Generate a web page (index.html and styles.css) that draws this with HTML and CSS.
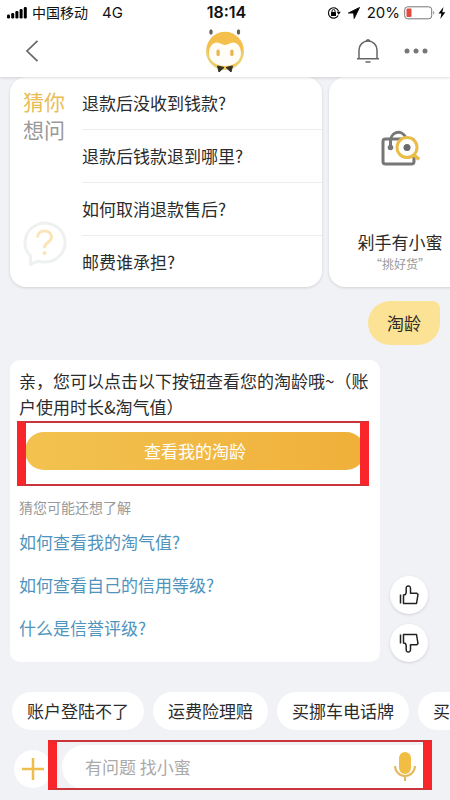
FILE: index.html
```html
<!DOCTYPE html>
<html lang="zh-CN">
<head>
<meta charset="utf-8">
<meta name="viewport" content="width=device-width, initial-scale=1">
<title>小蜜客服</title>
<link rel="stylesheet" href="styles.css">
</head>
<body>
<header class="top">
  <div class="status">
    <div class="status-side">
      <svg width="20" height="12" viewBox="0 0 20 12" aria-hidden="true"><rect x="0" y="7.5" width="3" height="4" rx="1.2"/><rect x="4.2" y="6" width="3" height="5.5" rx="1.2"/><rect x="8.4" y="4" width="3" height="7.5" rx="1.2"/><rect x="12.6" y="2" width="3" height="9.5" rx="1.2"/><rect x="16.8" y="0" width="3" height="11.5" rx="1.2"/></svg>
      <span class="carrier">中国移动</span>
      <span class="network">4G</span>
    </div>
    <time class="clock">18:14</time>
    <div class="status-side status-right">
      <svg width="14" height="14" viewBox="0 0 14 14" aria-hidden="true"><path d="M11.2 9.5A5.2 5.2 0 1 1 11.6 5.4" fill="none" stroke="#111" stroke-width="1.2"/><path d="M9.6 5.8h4.2l-2.1 3z"/><rect x="4" y="6" width="5" height="4" rx=".5"/><path d="M5 6.2V5a1.5 1.5 0 0 1 3 0v1.2" fill="none" stroke="#111"/></svg>
      <svg class="locator" width="12" height="12" viewBox="0 0 12 12" aria-hidden="true"><path d="M11.5.5.4 6h5.3l.5 5.5z" stroke="#111"/></svg>
      <span class="percent">20%</span>
      <svg width="42" height="14" viewBox="0 0 42 14" aria-hidden="true"><rect x=".7" y=".8" width="27" height="12" rx="3" fill="none" stroke="#777"/><rect x="2.5" y="2.6" width="5" height="8.4" rx="1" fill="#e34b3f"/><path d="M29.3 4.8q2 2 0 4z" fill="#777"/><path d="M39.5 1 34.5 7.5h3L36.3 13l5-6.700h-3z"/></svg>
    </div>
  </div>
  <nav class="nav">
    <button class="icon-button" aria-label="返回"><svg width="14" height="24" viewBox="0 0 14 24"><path d="M12.5 1.8 2 12l10.500 10.200" fill="none" stroke="#666" stroke-width="1.700"/></svg></button>
    <svg class="bee" width="40" height="46" viewBox="0 0 40 46" aria-hidden="true"><ellipse cx="6" cy="4" rx="1.700" ry="2.700" fill="#665f54"/><ellipse cx="33.500" cy="4" rx="1.700" ry="2.700" fill="#665f54"/><circle cx="20" cy="22.500" r="18.700" fill="#f4c04b"/><path d="M2 23a18 18 0 0 0 36 0" fill="none" stroke="#e8d274" stroke-width="2"/><path d="M4 25.500c0-7 3.500-11 8-11 3 0 5 2.500 8 2.500s5-2.500 8-2.500c4.500 0 8 4 8 11 0 7.500-6.500 12.500-16 12.500S4 33 4 25.500z" fill="#fffdf6"/><rect x="11.500" y="21.500" width="3.200" height="6.500" rx="1.500" fill="#e6b450"/><rect x="25.300" y="21.500" width="3.200" height="6.500" rx="1.500" fill="#e6b450"/><path d="M12.500 38l6.500 1.500-5 4.500zM27.500 38 21 39.500l5 4.500z" fill="#333126" stroke="#333126" stroke-linejoin="round"/></svg>
    <div class="nav-actions">
      <button class="icon-button" aria-label="通知"><svg width="24" height="26" viewBox="0 0 24 26"><path d="M3 20.800V12a9 9 0 0 1 18 0v8.800M1 20.800h22M10 3q2-2.500 4 0M9.500 24h5" fill="none" stroke="#666" stroke-width="1.500"/></svg></button>
      <button class="icon-button" aria-label="更多"><svg width="24" height="6" viewBox="0 0 24 6" fill="#777"><circle cx="3" cy="3" r="2.500"/><circle cx="12" cy="3" r="2.500"/><circle cx="21" cy="3" r="2.500"/></svg></button>
    </div>
  </nav>
</header>

<main class="chat">
  <div class="cards">
    <section class="card guess">
      <div class="guess-side">
        <h2 class="guess-title"><span class="gold">猜你</span><br>想问</h2>
        <svg width="44" height="46" viewBox="0 0 44 46" aria-hidden="true"><path d="M7.500 43.500V35A20 19.500 0 1 1 20 41q-3-.3-5-.8z" fill="none" stroke="#edf1f0" stroke-width="3" stroke-linejoin="round"/><path d="M14.500 16.500c0-4 3-6.500 7-6.500s7 2.500 7 6c0 5.500-7 5-7 11" fill="none" stroke="#fbe5b8" stroke-width="3"/><circle cx="21.500" cy="32" r="2" fill="#fbe5b8"/></svg>
      </div>
      <ul class="questions">
        <li><a href="#">退款后没收到钱款?</a></li>
        <li><a href="#">退款后钱款退到哪里?</a></li>
        <li><a href="#">如何取消退款售后?</a></li>
        <li><a href="#">邮费谁承担?</a></li>
      </ul>
    </section>
    <section class="card promo">
      <svg width="40" height="38" viewBox="0 0 40 38" fill="none" aria-hidden="true"><rect x="3" y="9" width="31" height="25" rx="2.500" stroke="#777" stroke-width="3"/><path d="M10.500 17V12a8 9 0 0 1 15-5" stroke="#777" stroke-width="3"/><circle cx="10.500" cy="17.500" r="2.800" fill="#777"/><circle cx="27" cy="17.500" r="10" fill="#fff" stroke="#e9bd48" stroke-width="3"/><path d="m33.500 24.500 5.500 5" stroke="#e9bd48" stroke-width="3.500"/><circle cx="27" cy="17.500" r="3.500" fill="#6b6b6b"/></svg>
      <h3 class="promo-title">剁手有小蜜</h3>
      <p class="promo-note">“挑好货”</p>
    </section>
  </div>

  <p class="bubble">淘龄</p>

  <div class="reply">
    <article class="answer">
      <p class="answer-text">亲，您可以点击以下按钮查看您的淘龄哦~（账户使用时长&amp;淘气值）</p>
      <div class="mark mark-answer"><button class="primary">查看我的淘龄</button></div>
      <p class="hint">猜您可能还想了解</p>
      <ul class="links">
        <li><a href="#">如何查看我的淘气值?</a></li>
        <li><a href="#">如何查看自己的信用等级?</a></li>
        <li><a href="#">什么是信誉评级?</a></li>
      </ul>
    </article>
    <div class="votes">
      <button class="vote" aria-label="有用"><svg width="20" height="20" viewBox="0 0 20 20"><path d="M1.500 9.500v9M4.500 10v8.500h13L19 9.500l-1.200-1.300h-6.300V3.500Q11.500 1 9.300 1T7.200 3.500v4L6.500 9.500 4.500 10z"/></svg></button>
      <button class="vote" aria-label="没用"><svg class="flipped" width="20" height="20" viewBox="0 0 20 20"><path d="M1.500 9.500v9M4.500 10v8.500h13L19 9.500l-1.200-1.300h-6.300V3.500Q11.500 1 9.300 1T7.200 3.500v4L6.500 9.500 4.500 10z"/></svg></button>
    </div>
  </div>
</main>

<footer class="dock">
  <div class="chips">
    <button class="chip">账户登陆不了</button>
    <button class="chip">运费险理赔</button>
    <button class="chip">买挪车电话牌</button>
    <button class="chip">买家信誉</button>
  </div>
  <form class="composer">
    <button class="add" type="button" aria-label="添加"><svg width="22" height="22" viewBox="0 0 22 22"><path d="M11 0v22M0 11h22" stroke="#eebd4b" stroke-width="2.500"/></svg></button>
    <div class="mark mark-input">
      <div class="field">
        <input class="message" type="text" aria-label="输入问题" placeholder="有问题 找小蜜">
        <button class="icon-button" type="button" aria-label="语音输入"><svg width="22" height="30" viewBox="0 0 22 30"><rect x="5" y="0" width="12" height="22" rx="6" fill="#f1bd45"/><path d="M1 14a10 10 0 0 0 20 0M11 24v5" fill="none" stroke="#e3b85a" stroke-width="2"/></svg></button>
      </div>
    </div>
  </form>
</footer>
</body>
</html>
```
FILE: styles.css
```css
* {
  box-sizing: border-box;
}

body {
  margin: 0;
  min-height: 100vh;
  display: flex;
  flex-direction: column;
  background: #f0f2f5;
  color: #2b2b2b;
  font: 17px/26px "Noto Sans CJK SC", sans-serif;
  overflow-x: hidden;
}

h2, h3, p, ul {
  margin: 0;
  padding: 0;
  font-weight: 400;
}

ul {
  list-style: none;
}

a {
  color: inherit;
  text-decoration: none;
}

button {
  border: 0;
  padding: 0;
  background: none;
  color: inherit;
  font: inherit;
}

svg {
  display: block;
  flex: none;
}

.top {
  position: relative;
  background: #fff;
  box-shadow: 0 1px 3px #0002;
}

.status,
.nav {
  display: grid;
  grid-template-columns: 1fr auto 1fr;
  align-items: center;
}

.status {
  height: 25px;
  padding: 0 4px 0 7px;
  color: #111;
  font: 15px/25px Inter, "Noto Sans CJK SC", sans-serif;
}

.status-side {
  display: flex;
  align-items: center;
}

.carrier {
  margin-left: 5px;
  font-size: 14px;
}

.network {
  margin-left: 14px;
}

.clock {
  font-size: 16px;
  font-weight: 600;
}

.status-right {
  justify-content: flex-end;
}

.locator {
  margin: 0 7px;
}

.percent {
  margin-right: 4px;
}

.nav {
  height: 52px;
  padding: 0 22px;
}

.nav-actions {
  display: flex;
  justify-content: flex-end;
  align-items: center;
  gap: 24px;
}

.icon-button {
  display: flex;
}

.nav > .icon-button {
  justify-self: start;
  padding-left: 3px;
}

.cards {
  display: flex;
  gap: 7px;
  padding: 0 0 14px 10px;
  overflow: hidden;
}

.card {
  flex: none;
  height: 210px;
  border-radius: 16px;
  background: #fff;
  box-shadow: 0 1px 3px #0002;
}

.guess {
  display: flex;
  width: 312px;
}

.guess-side {
  display: flex;
  flex-direction: column;
  justify-content: space-between;
  width: 72px;
  padding: 10px 0 20px 13px;
}

.guess-title {
  color: #999;
  font-size: 21px;
  line-height: 28px;
}

.gold {
  color: #e9bd55;
}

.questions {
  flex: 1;
}

.questions a {
  display: block;
  line-height: 52px;
}

.questions li + li {
  border-top: 1px solid #ececec;
}

.promo {
  display: flex;
  flex-direction: column;
  align-items: center;
  width: 142px;
  padding-top: 53px;
}

.promo-title {
  margin-top: 61px;
  font-size: 17px;
}

.promo-note {
  color: #999;
  font-size: 12px;
  line-height: 18px;
}

.bubble {
  width: fit-content;
  margin: 0 10px 15px auto;
  padding: 9px 19px;
  border-radius: 22px 8px 22px 22px;
  background: #fbe294;
}

.reply {
  display: flex;
  align-items: flex-end;
  gap: 10px;
  padding: 0 22px 0 10px;
}

.answer {
  flex: 1;
  padding: 8px 9px 13px;
  border-radius: 10px;
  background: #fff;
}

.mark {
  position: relative;
}

/* Red frame drawn over the highlighted control */
.mark::after {
  content: "";
  position: absolute;
  inset: 0;
  border: solid #f8262a;
  border-width: 2px 9px;
  border-top-color: #c8353a;
  border-bottom-color: #c8353a;
  pointer-events: none;
}

.mark-answer {
  margin: 1px 2px 0 -2px;
  padding: 11px 4px 16px 8px;
}

.primary {
  display: block;
  width: 100%;
  height: 38px;
  border-radius: 19px;
  background: linear-gradient(90deg, #f2c24f, #f0b03a);
  color: #fff;
}

.hint {
  margin-top: 8px;
  color: #999;
  font-size: 14px;
}

.links {
  color: #4f94bd;
}

.links a {
  display: block;
  line-height: 43px;
}

.votes {
  display: grid;
  gap: 10px;
}

.vote,
.add {
  display: grid;
  place-items: center;
  width: 38px;
  height: 38px;
  border-radius: 50%;
  background: #fff;
}

.vote {
  box-shadow: 0 1px 3px #0002;
}

.vote path {
  fill: none;
  stroke: #222;
  stroke-width: 1.5;
  stroke-linejoin: round;
}

.flipped {
  transform: scaleY(-1);
}

.dock {
  margin-top: auto;
  padding-bottom: 10px;
}

.chips {
  display: flex;
  gap: 9px;
  padding-left: 12px;
  overflow: hidden;
}

.chip {
  flex: none;
  height: 38px;
  padding: 0 15px;
  border-radius: 19px;
  background: #fff;
}

.composer {
  display: flex;
  align-items: flex-end;
  margin-top: 10px;
  padding: 0 18px 0 14px;
}

.add {
  flex: none;
  margin-bottom: 2px;
}

.mark-input {
  flex: 1;
  margin-left: -4px;
  padding: 5px 8px 1px 14px;
}

.field {
  display: flex;
  align-items: center;
  height: 44px;
  padding: 0 8px 0 23px;
  border-radius: 22px 0 0 22px;
  background: #fff;
}

.message {
  flex: 1;
  min-width: 0;
  padding: 0;
  border: 0;
  outline: 0;
  background: none;
  font: inherit;
}

.message::placeholder {
  color: #aaa;
  opacity: 1;
}
```
